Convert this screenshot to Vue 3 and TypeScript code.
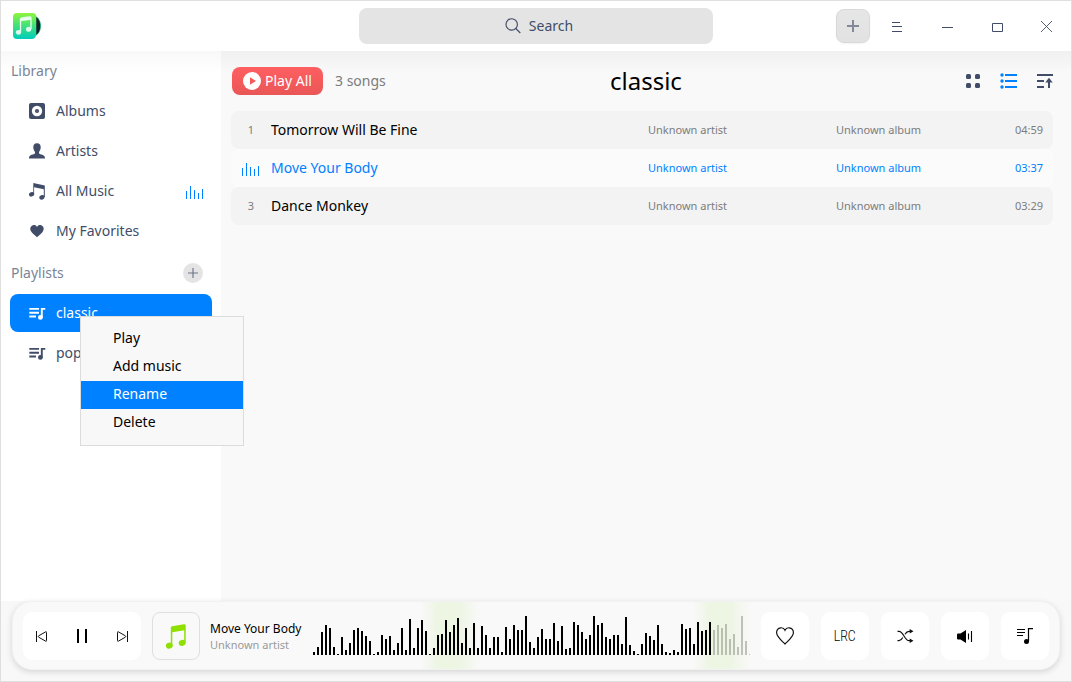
<script setup lang="ts">
interface Song {
  title: string
  artist: string
  album: string
  length: string
}

const songs: Song[] = [
  { title: 'Tomorrow Will Be Fine', artist: 'Unknown artist', album: 'Unknown album', length: '04:59' },
  { title: 'Move Your Body', artist: 'Unknown artist', album: 'Unknown album', length: '03:37' },
  { title: 'Dance Monkey', artist: 'Unknown artist', album: 'Unknown album', length: '03:29' },
]
const current = 1

const playlists: string[] = ['classic', 'pop']
const menu: string[] = ['Play', 'Add music', 'Rename', 'Delete']

const wave: number[] = [
  3, 8, 23, 30, 27, 8, 1, 18, 5, 12, 25, 27, 24, 19, 14, 1, 3, 20, 16, 19, 5, 12,
  27, 5, 36, 7, 27, 35, 24, 1, 7, 20, 21, 35, 23, 30, 37, 12, 27, 7, 32, 7, 29, 20,
  7, 18, 18, 3, 28, 16, 30, 25, 25, 39, 13, 7, 18, 26, 16, 16, 32, 14, 29, 6, 7, 33,
  30, 23, 16, 20, 39, 30, 32, 18, 16, 20, 20, 11, 38, 10, 4, 1, 11, 22, 19, 15, 30,
  11, 3, 2, 5, 3, 31, 26, 27, 11, 33, 24, 25, 33, 25, 30, 27, 31, 16, 21, 8, 39, 14, 1,
]
const played = 100
</script>

<template>
  <div class="window">
    <header class="titlebar">
      <div class="left">
        <svg class="logo" width="28" height="28" viewBox="0 0 28 28">
          <defs>
            <linearGradient id="logoFill" x1="0" y1="0" x2="0" y2="1">
              <stop offset="0" stop-color="#8ff53f" />
              <stop offset=".5" stop-color="#3fe07c" />
              <stop offset="1" stop-color="#00cdbc" />
            </linearGradient>
          </defs>
          <path d="M21 3.500C26 5 28 9.500 28 14S26 22.500 21 24.500Z" fill="#2fbf78" />
          <path d="M21 4C25.500 5.500 27.200 9.500 27.200 14S25.500 22 21 24Z" fill="#171c2c" />
          <path d="M4 1H20Q22.500 1 23.300 4V23Q22 27 19 27H4Q0 27 0 23V5Q0 1 4 1Z" fill="url(#logoFill)" />
          <path d="M7.500 20V7.200Q7.500 6.300 8.500 6L17 4.800Q18 4.800 18 5.700V17" fill="none" stroke="#e9fff2" stroke-width="1.300" />
          <path d="M7.500 6.600L18 5.200V7.700L7.500 9.200Z" fill="#e9fff2" />
          <ellipse cx="5.500" cy="20.300" rx="2.600" ry="2.400" fill="#d9fbf0" />
          <ellipse cx="15.600" cy="17.200" rx="2.600" ry="2.500" fill="#d9fbf0" />
        </svg>
      </div>
      <div class="search">
        <svg width="16" height="16" viewBox="0 0 16 16" fill="none" stroke="#414d68" stroke-width="1.150">
          <circle cx="6.700" cy="6.400" r="5.700" /><path d="M10.800 10.500L15.300 15" />
        </svg>
        <span>Search</span>
      </div>
      <div class="right">
        <div class="add">
          <svg width="12" height="12" viewBox="0 0 12 12"><path d="M0 6H12M6 0V12" stroke="#414d68" stroke-opacity=".6" stroke-width="2" /></svg>
        </div>
        <svg class="ham" width="10" height="10" viewBox="0 0 10 10" stroke="#414d68"><path d="M0 .5H8M0 4.500H10M0 9.500H10" /></svg>
        <svg class="min" width="11" height="11" viewBox="0 0 11 11" stroke="#414d68"><path d="M0 5.500H11" /></svg>
        <svg class="max" width="11" height="9" viewBox="0 0 11 9" fill="none" stroke="#414d68"><path d="M.5 .5H10.500V8.500H.5Z" /></svg>
        <svg class="close" width="11" height="11" viewBox="0 0 11 11" fill="none" stroke="#414d68" stroke-width=".9"><path d="M0 0L11 11M11 0L0 11" /></svg>
      </div>
    </header>

    <div class="body">
      <aside class="sidebar">
        <div class="heading">Library</div>
        <div class="item">
          <svg width="16" height="16" viewBox="0 0 16 16">
            <rect width="16" height="16" rx="2" fill="#414d68" /><circle cx="8" cy="8" r="5.200" fill="#fff" /><circle cx="8" cy="8" r="2.100" fill="#414d68" /><circle cx="8" cy="8" r=".6" fill="#8b93a5" />
          </svg>
          <span>Albums</span>
        </div>
        <div class="item">
          <svg width="16" height="16" viewBox="0 0 16 16" fill="#414d68"><path d="M8 .2C10.700 .2 12 2 11.700 4.700C11.500 6.800 10.600 8 10 9V10.600C11 11.600 16 11.700 16 15V15.600H0V15C0 11.700 5 11.600 6 10.600V9C5.400 8 4.500 6.800 4.300 4.700C4 2 5.300 .2 8 .2Z" /></svg>
          <span>Artists</span>
        </div>
        <div class="item">
          <svg width="16" height="17" viewBox="0 0 16 17" fill="#414d68">
            <path d="M4.300 0L15.800 2.500V14H14.800V6.300L5.100 4.300V11H4.300Z" />
            <ellipse cx="2.600" cy="11.300" rx="2.700" ry="2.200" transform="rotate(-20 2.600 11.300)" /><ellipse cx="12.900" cy="14.400" rx="2.700" ry="2.200" transform="rotate(-20 12.900 14.400)" />
          </svg>
          <span>All Music</span>
          <svg class="playing" width="17" height="13" viewBox="0 0 17 13" fill="#0081ff"><path d="M0 5h1v8H0zM4 0h1v13H4zM8 4h1v9H8zM12 7h1v6h-1zM16 3h1v10h-1z" /></svg>
        </div>
        <div class="item">
          <svg width="16" height="16" viewBox="0 0 16 16" fill="#414d68"><path d="M8 4C9 1.800 11 1.800 12.200 2.300C14.600 3.200 15.500 6 14 8.200C13 10 10 12.500 8 14.200C6 12.500 3 10 2 8.200C.5 6 1.400 3.200 3.800 2.300C5 1.800 7 1.800 8 4Z" /></svg>
          <span>My Favorites</span>
        </div>
        <div class="heading lists">
          Playlists
          <div class="plus"><svg width="10" height="10" viewBox="0 0 10 10"><path d="M0 5H10M5 0V10" stroke="#6b7489" stroke-width="1.150" /></svg></div>
        </div>
        <div v-for="(p, i) in playlists" :key="p" class="item list" :class="{ active: i === 0 }">
          <svg width="17" height="14" viewBox="0 0 17 14" fill="none" stroke="currentColor">
            <path d="M.3 2.900H10M.3 6.700H10M.3 10.500H7" stroke-width="1.900" />
            <path d="M12.800 11.500V2.900H16.300" stroke-width="1.900" /><circle cx="11.400" cy="11.400" r="2.400" fill="currentColor" stroke="none" />
          </svg>
          <span>{{ p }}</span>
        </div>
      </aside>

      <main class="content">
        <div class="toolbar">
          <div class="playall">
            <svg width="18" height="18" viewBox="0 0 18 18"><circle cx="9" cy="9" r="9" fill="#fff" /><path d="M7 5.200L13 9L7 12.800Z" fill="#f45a5c" /></svg>
            <span>Play All</span>
          </div>
          <span class="count">3 songs</span>
          <h1>classic</h1>
          <div class="views">
            <svg width="14" height="14" viewBox="0 0 14 14" fill="#414d68"><rect width="5" height="5" rx="1.500" /><rect x="9" width="5" height="5" rx="1.500" /><rect y="9" width="5" height="5" rx="1.500" /><rect x="9" y="9" width="5" height="5" rx="1.500" /></svg>
            <svg width="17" height="16" viewBox="0 0 17 16" fill="#0081ff"><circle cx="2" cy="2" r="1.700" /><circle cx="2" cy="8" r="1.700" /><circle cx="2" cy="14" r="1.700" /><path d="M5 1H17V3H5ZM5 7H17V9H5ZM5 13H17V15H5Z" /></svg>
            <svg width="16" height="14" viewBox="0 0 16 14" fill="none" stroke="#414d68" stroke-width="2"><path d="M0 1H16M0 7H7M0 13H7" /><path d="M12 14V6" /><path d="M12 3.800L15.700 8.400H8.300Z" fill="#414d68" stroke="none" /></svg>
          </div>
        </div>
        <div v-for="(s, i) in songs" :key="s.title" class="row" :class="{ current: i === current }">
          <span class="num">
            <svg v-if="i === current" width="17" height="13" viewBox="0 0 17 13" fill="#0081ff"><path d="M0 5h1v8H0zM4 0h1v13H4zM8 4h1v9H8zM12 6h1v7h-1zM16 3h1v10h-1z" /></svg>
            <template v-else>{{ i + 1 }}</template>
          </span>
          <span class="name">{{ s.title }}</span>
          <span class="artist">{{ s.artist }}</span>
          <span class="album">{{ s.album }}</span>
          <span class="time">{{ s.length }}</span>
        </div>
      </main>
    </div>

    <footer class="dock">
      <div class="player">
        <div class="controls">
          <svg class="skip" width="11" height="11" viewBox="0 0 11 11" fill="none" stroke="#111"><path d="M.5 0V11" /><path d="M10.500 1.400V9.600Q10.500 10.700 9.500 10.100L2.700 6.200Q1.800 5.500 2.700 4.800L9.500 .9Q10.500 .3 10.500 1.400Z" /></svg>
          <svg width="10" height="14" viewBox="0 0 10 14"><path d="M0 0h2v14H0zM8 0h2v14H8z" /></svg>
          <svg class="skip" width="11" height="11" viewBox="0 0 11 11" fill="none" stroke="#111"><path d="M10.500 0V11" /><path d="M.5 1.400V9.600Q.5 10.700 1.500 10.100L8.300 6.200Q9.200 5.500 8.300 4.800L1.500 .9Q.5 .3 .5 1.400Z" /></svg>
        </div>
        <div class="cover">
          <svg width="20" height="25" viewBox="0 0 20 25" fill="#8fe000">
            <path d="M4.800 3.800Q4.800 2.600 6.100 2.300L18 .2Q19.700 0 19.700 1.500V18.500H18.200V6.200L6.300 8.200V21.500H4.800Z" />
            <ellipse cx="3.300" cy="21.600" rx="3.500" ry="3" transform="rotate(-15 3.300 21.600)" /><ellipse cx="16.200" cy="18.900" rx="3.500" ry="3" transform="rotate(-15 16.200 18.900)" />
          </svg>
        </div>
        <div class="now">
          <div class="track">Move Your Body</div>
          <div class="by">Unknown artist</div>
        </div>
        <div class="wave">
          <i v-for="(h, i) in wave" :key="i" :class="{ rest: i >= played }" :style="{ height: h + 'px' }"></i>
        </div>
        <div class="buttons">
          <div class="btn"><svg width="18" height="18" viewBox="0 0 18 18" fill="none" stroke="#111" stroke-width="1.200"><path d="M9 3.300C10 1.200 11.800 .6 13.300 .8C16 1.100 17.400 3.300 17.400 5.800C17.300 9.800 12.500 13.500 9 17C5.500 13.500 .7 9.800 .6 5.800C.6 3.300 2 1.100 4.700 .8C6.200 .6 8 1.200 9 3.300Z" /></svg></div>
          <div class="btn lrc"><span>LRC</span></div>
          <div class="btn"><svg width="17" height="14" viewBox="0 0 17 14" fill="none" stroke="#111" stroke-width="1.200"><path d="M.5 2.300H2C6.500 2.300 7.500 11.700 12 11.700H14M.5 11.700H2C3.800 11.700 4.900 10.100 5.800 8.500M8 5.300C8.900 3.700 10.200 2.300 12 2.300H14" /><path d="M12.700 0L16.500 2.300L12.700 4.600ZM12.700 9.400L16.500 11.700L12.700 14Z" fill="#111" stroke="none" /></svg></div>
          <div class="btn"><svg width="16" height="13" viewBox="0 0 16 13"><path d="M0 4.500Q0 3.500 1.200 3.500H3.500L9 0V13L3.500 9.500H1.200Q0 9.500 0 8.500Z" /><path d="M11.500 3.500V9.500M14.500 1V12" stroke="#000" stroke-width="1.100" /></svg></div>
          <div class="btn"><svg width="16" height="16" viewBox="0 0 16 16" fill="none" stroke="#000" stroke-width="1"><path d="M0 1.500H8M0 4.500H8M0 7.500H6" /><path d="M11.500 13V.6H16" stroke-width="1.200" /><circle cx="9.500" cy="13.500" r="2.500" fill="#000" stroke="none" /></svg></div>
        </div>
      </div>
    </footer>

    <div class="menu">
      <div v-for="m in menu" :key="m" :class="{ hover: m === 'Rename' }">{{ m }}</div>
    </div>
  </div>
</template>

<style>
body { margin: 0; overflow: hidden; }
</style>

<style scoped>
* { box-sizing: border-box; }
svg { display: block; flex: none; }
.window {
  position: relative; display: flex; flex-direction: column;
  width: 1072px; height: 682px; border: 1px solid #dfdfdf; background: #f8f8f8;
  font-family: "Noto Sans", sans-serif; font-size: 14px; line-height: 20px; color: #000;
}
.titlebar { display: flex; height: 50px; background: #fff; align-items: center; }
.left { width: 358px; padding-left: 12px; }
.search {
  width: 354px; height: 36px; border-radius: 8px; background: #e4e4e4; color: #414d68;
  display: flex; align-items: center; justify-content: center; gap: 8px; padding-left: 6px;
}
.right { display: flex; align-items: center; padding-left: 123px; }
.add {
  width: 34px; height: 34px; border-radius: 8px; border: 1px solid #d8d8d8;
  background: linear-gradient(#e6e6e6, #e2e2e2); display: flex; align-items: center; justify-content: center;
  box-shadow: 0 1px 2px rgba(0, 0, 0, .05);
}
.ham { margin: 2px 0 0 22px; }
.min { margin: 3px 0 0 40px; }
.max { margin: 3px 0 0 39px; }
.close { margin: 1px 0 0 38px; }
.body { display: flex; height: 550px; }
.sidebar { width: 220px; background: linear-gradient(#f8f8f8, #fff 22px); }
.heading { height: 40px; padding: 0 10px; display: flex; align-items: center; color: #7b8496; }
.lists { margin: 2px 0 1px; justify-content: space-between; padding-right: 18px; }
.plus { width: 20px; height: 20px; border-radius: 50%; background: #e4e4e4; display: flex; align-items: center; justify-content: center; }
.item { height: 40px; padding: 0 18px 0 28px; display: flex; align-items: center; gap: 11px; color: #414d68; }
.playing { margin: 3px 0 0 auto; }
.list { height: 38px; margin: 0 9px 2px; padding: 0 0 0 19px; gap: 10px; border-radius: 8px; }
.active { background: #0081ff; color: #fff; }
.content { flex: 1; padding: 0 18px 0 10px; background: linear-gradient(#f0f0f0, #f9f9f9 22px); }
.toolbar { display: flex; align-items: center; height: 60px; padding-left: 1px; }
.playall {
  width: 91px; height: 28px; border-radius: 8px; background: linear-gradient(#ff5f61, #e95656); color: #fff;
  display: flex; align-items: center; gap: 4px; padding-left: 11px; white-space: nowrap;
}
.count { margin-left: 12px; width: 275px; color: #7c7c7c; }
h1 { margin: 0; font-size: 24px; line-height: 32px; font-weight: 400; }
.views { margin-left: auto; display: flex; align-items: center; gap: 20px; }
.row { height: 38px; border-radius: 8px; background: #f3f3f3; display: flex; align-items: center; font-size: 11px; color: #7c7c7c; }
.num { width: 40px; display: flex; justify-content: center; }
.num svg { margin: 3px 1px 0 0; }
.name { width: 377px; font-size: 14px; color: #000; }
.artist { width: 188px; }
.album { flex: 1; }
.time { margin-right: 10px; }
.current { background: #fbfbfb; color: #0081ff; }
.current .name { color: #0081ff; }
.dock { flex: 1; padding: 0 11px 11px; }
.player {
  height: 69px; border-radius: 20px; display: flex; align-items: center;
  border: 1px solid #f2f2f2; box-shadow: 0 2px 6px rgba(0, 0, 0, .14); padding: 1px 10px 0;
  background:
    linear-gradient(90deg, transparent 408px, #edf5e3 425px 446px, transparent 466px, transparent 680px, #edf5e3 697px 716px, transparent 738px),
    #f9f9f9;
}
.controls { width: 118px; height: 48px; border-radius: 9px; background: #fff; display: flex; align-items: center; justify-content: space-between; padding: 0 13px; }
.skip { margin-top: 1px; }
.cover { width: 48px; height: 48px; margin-left: 11px; border-radius: 8px; border: 1px solid #dfdfdf; display: flex; align-items: center; justify-content: center; }
.now { flex: none; width: 113px; padding-left: 10px; white-space: nowrap; }
.track { font-size: 12px; line-height: 17px; }
.by { font-size: 11px; line-height: 15px; color: #999; }
.wave { display: flex; flex: none; align-items: flex-end; gap: 2px; height: 40px; width: 448px; margin-bottom: 2px; }
.wave i { width: 2px; flex: none; background: #000; }
.wave .rest { opacity: .22; }
.wave .rest:last-child { width: 1px; }
.buttons { display: flex; gap: 12px; }
.btn { width: 48px; height: 48px; border-radius: 9px; background: #fff; display: flex; align-items: center; justify-content: center; }
.lrc span { font-family: Roboto, "Noto Sans", sans-serif; font-weight: 300; font-size: 14px; display: block; transform: scaleX(.86); }
.menu { position: absolute; left: 79px; top: 315px; width: 164px; height: 130px; border: 1px solid #dcdcdc; background: #f8f8f8; padding-top: 8px; }
.menu div { height: 28px; line-height: 26px; padding-left: 32px; }
.menu .hover { background: #0081ff; color: #fff; }
</style>
